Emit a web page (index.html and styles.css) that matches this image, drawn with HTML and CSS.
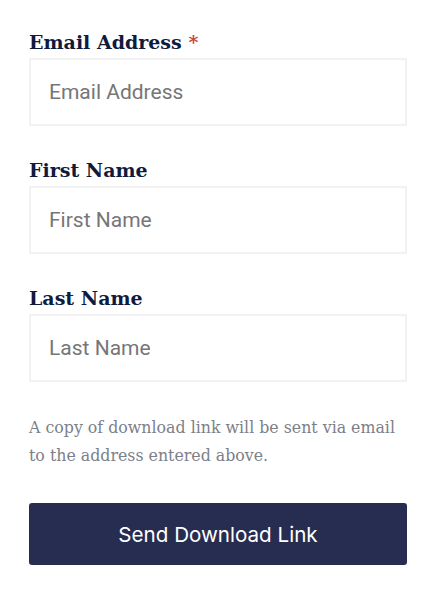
FILE: index.html
```html
<!DOCTYPE html>
<html>
<head>
<meta charset="utf-8">
<link rel="stylesheet" href="styles.css">
</head>
<body>
<form class="form">
  <div class="field">
    <label class="label">Email Address <span class="req">*</span></label>
    <input class="input" type="text" placeholder="Email Address">
  </div>
  <div class="field">
    <label class="label">First Name</label>
    <input class="input" type="text" placeholder="First Name">
  </div>
  <div class="field">
    <label class="label">Last Name</label>
    <input class="input" type="text" placeholder="Last Name">
  </div>
  <p class="note">A copy of download link will be sent via email to the address entered above.</p>
  <button class="btn" type="button">Send Download Link</button>
</form>
</body>
</html>
```
FILE: styles.css
```css
html, body { margin: 0; padding: 0; background: #fff; }
.form {
  width: 378px;
  padding: 29px 0 0 29px;
  display: flex;
  flex-direction: column;
}
.field {
  display: flex;
  flex-direction: column;
  gap: 3px;
  margin-bottom: 31px;
}
.label {
  font-family: "DejaVu Serif", "Liberation Serif", serif;
  font-weight: bold;
  font-size: 19px;
  line-height: 26px;
  color: #0f1a3d;
}
.req { color: #c8473e; }
.input {
  box-sizing: border-box;
  height: 68px;
  width: 378px;
  border: 2px solid #f2f2f2;
  border-radius: 0;
  padding: 0 18px;
  font-family: Roboto, "Liberation Sans", sans-serif;
  font-size: 21px;
  color: #333;
  outline: none;
  background: #fff;
}
.input::placeholder { color: #767676; }
.note {
  margin: 1px 0 0;
  font-family: "DejaVu Serif", "Liberation Serif", serif;
  font-size: 15.8px;
  line-height: 28px;
  color: #7b8089;
}
.btn {
  margin-top: 33px;
  height: 62px;
  width: 378px;
  border: none;
  border-radius: 3px;
  background: #272d50;
  color: #fff;
  font-family: Inter, "Liberation Sans", sans-serif;
  font-size: 20.6px;
  cursor: pointer;
}
```
